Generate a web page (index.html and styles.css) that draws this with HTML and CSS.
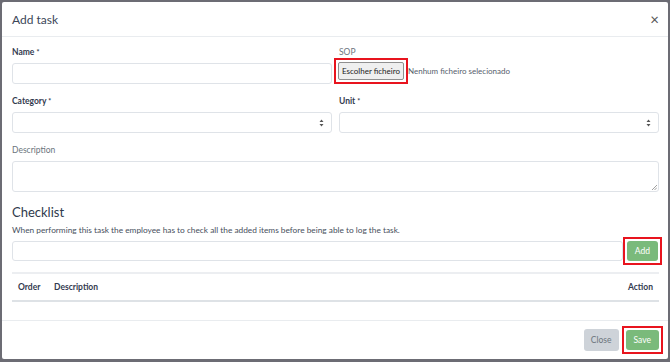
FILE: index.html
```html
<!DOCTYPE html>
<html lang="en">
<head>
    <meta charset="UTF-8">
    <meta name="viewport" content="width=device-width, initial-scale=1.0">
    <title>Add task</title>

    <link rel="stylesheet" href="styles.css">
</head>

<body>

  <div class="modal">

    <div class="modalHeader">
      <span class="modalTitle">Add task</span>
      <span class="btnFechar">&times;</span>
    </div>

    <div class="modalBody">

      <div class="linha">
        <div class="campo">
          <label class="rotulo">Name <span class="asterisco">*</span></label>
          <input type="text" class="caixa">
        </div>
        <div class="campo">
          <label class="rotulo rotuloLeve">SOP</label>
          <div class="arquivo">
            <span class="destaque"><span class="btnArquivo">Escolher ficheiro</span></span>
            <span class="semArquivo">Nenhum ficheiro selecionado</span>
          </div>
        </div>
      </div>

      <div class="linha">
        <div class="campo">
          <label class="rotulo">Category <span class="asterisco">*</span></label>
          <div class="caixa seletor">
            <svg width="5" height="8" viewBox="0 0 5 8"><path d="M2.5 0.5 L4.5 3 L0.5 3 Z M2.5 7.5 L4.5 5 L0.5 5 Z" fill="#555"/></svg>
          </div>
        </div>
        <div class="campo">
          <label class="rotulo">Unit <span class="asterisco">*</span></label>
          <div class="caixa seletor">
            <svg width="5" height="8" viewBox="0 0 5 8"><path d="M2.5 0.5 L4.5 3 L0.5 3 Z M2.5 7.5 L4.5 5 L0.5 5 Z" fill="#555"/></svg>
          </div>
        </div>
      </div>

      <div class="campo">
        <label class="rotulo rotuloLeve">Description</label>
        <div class="caixa areaTexto">
          <svg class="alca" width="6" height="6" viewBox="0 0 6 6">
            <path d="M1 6 L6 1 M3.5 6 L6 3.5" stroke="#888" stroke-width="0.8"/>
          </svg>
        </div>
      </div>

      <h3 class="tituloChecklist">Checklist</h3>
      <p class="ajuda">When performing this task the employee has to check all the added items before being able to log the task.</p>

      <div class="linhaAdd">
        <input type="text" class="caixa caixaItem">
        <span class="destaque destaqueAdd"><span class="btnVerde">Add</span></span>
      </div>

      <table class="tabela">
        <thead>
          <tr>
            <th class="colOrdem">Order</th>
            <th>Description</th>
            <th class="colAcao">Action</th>
          </tr>
        </thead>
      </table>

    </div>

    <div class="modalFooter">
      <span class="btnCinza">Close</span>
      <span class="destaque"><span class="btnVerde">Save</span></span>
    </div>

  </div>

</body>
</html>
```

FILE: styles.css
```css
body {
  margin: 0;
  background-color: #6c6c74;
  font-family: Lato, "Open Sans", sans-serif;
  color: #333b4f;
  height: 362px;
  overflow: hidden;
}

.modal {
  margin: 2px 2px 0 2px;
  height: 357px;
  background-color: #fff;
  border-radius: 2px;
  display: flex;
  flex-direction: column;
}

.modalHeader {
  height: 34px;
  padding: 0 9px 0 10px;
  border-bottom: 1px solid #e9ecef;
  display: flex;
  align-items: center;
  justify-content: space-between;
}

.modalTitle {
  font-size: 12px;
  color: #3b4658;
}

.btnFechar {
  font-size: 15px;
  color: #555;
}

.modalBody {
  flex: 1;
  padding: 10px 9px 0 10px;
}

/* campos do formulario */

.linha {
  display: grid;
  grid-template-columns: 1fr 1fr;
  gap: 7px;
}

.campo {
  display: flex;
  flex-direction: column;
  margin-bottom: 12px;
}

.rotulo {
  font-size: 8.5px;
  font-weight: bold;
  line-height: 11px;
  margin-bottom: 5px;
}

.asterisco {
  font-size: 7px;
}

.rotuloLeve {
  font-weight: normal;
  color: #6c757d;
}

.caixa {
  box-sizing: border-box;
  height: 21px;
  border: 1px solid #dfe3e8;
  border-radius: 3px;
  background: #fff;
  margin: 0;
}

.seletor {
  display: flex;
  align-items: center;
  justify-content: flex-end;
  padding-right: 7px;
}

.areaTexto {
  height: 31px;
  position: relative;
}

.alca {
  position: absolute;
  right: 1px;
  bottom: 1px;
}

.arquivo {
  display: flex;
  align-items: center;
  margin: -5px 0 0 -5px;
}

.destaque {
  border: 2px solid #e8141e;
  padding: 2px;
  display: inline-flex;
}

.btnArquivo {
  font-size: 8px;
  padding: 3px 3px;
  background: #efefef;
  border: 1px solid #8f8f8f;
  border-radius: 2px;
  color: #222;
}

.semArquivo {
  font-size: 8px;
  color: #555e6b;
}

/* checklist */

.tituloChecklist {
  font-size: 13px;
  font-weight: normal;
  margin: 9px 0 5px 0;
  color: #2f3a4c;
}

.ajuda {
  font-size: 8.3px;
  margin: 0 0 2px 0;
  color: #474f5c;
}

.linhaAdd {
  display: flex;
  align-items: center;
}

.caixaItem {
  flex: 1;
  height: 20px;
}

.destaqueAdd {
  margin-right: -3px;
}

.btnVerde {
  font-size: 8.5px;
  color: #fff;
  background: #7aba7b;
  border-radius: 3px;
  padding: 5px 8px;
}

.tabela {
  width: 100%;
  border-collapse: collapse;
  margin-top: 7px;
  font-size: 8.5px;
}

.tabela th {
  text-align: left;
  font-weight: bold;
  padding: 8px 6px;
  border-top: 2px solid #eceef1;
  border-bottom: 2px solid #dee2e6;
}

.tabela .colOrdem {
  width: 24px;
}

.tabela .colAcao {
  text-align: right;
}

/* rodape */

.modalFooter {
  height: 38px;
  border-top: 1px solid #e9ecef;
  display: flex;
  align-items: center;
  justify-content: flex-end;
  gap: 3px;
  padding-right: 5px;
}

.btnCinza {
  font-size: 8.5px;
  color: #6c757d;
  background: #ced3d9;
  border-radius: 3px;
  padding: 6px 7px;
}
```
